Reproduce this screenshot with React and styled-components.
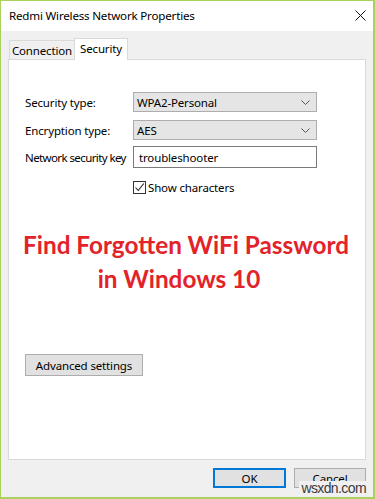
import React from "react";
import styled, { createGlobalStyle } from "styled-components";

const Global = createGlobalStyle`
  html, body { margin: 0; padding: 0; background: #ffffff; }
  * { box-sizing: border-box; }
`;

const Window = styled.div`
  position: relative;
  width: 375px;
  height: 499px;
  display: flex;
  flex-direction: column;
  border-style: solid;
  border-color: #a9d15e;
  border-width: 1px 2px 2px 1px;
  font-family: "Noto Sans", "Open Sans", sans-serif;
  font-size: 11.5px;
  letter-spacing: -0.15px;
  color: #000;
  overflow: hidden;
`;

const TitleBar = styled.div`
  height: 30px;
  flex: none;
  background: #ffffff;
  display: flex;
  align-items: center;
  justify-content: space-between;
  padding: 0 7px 1px 8px;
`;

const Title = styled.span`
  font-size: 11.6px;
  letter-spacing: -0.2px;
  white-space: nowrap;
`;

const CloseIcon = styled.svg`
  width: 11px;
  height: 11px;
`;

const Body = styled.div`
  flex: 1;
  background: #f0f0f0;
  display: flex;
  flex-direction: column;
  padding: 7px 7px 0 7px;
`;

const TabRow = styled.div`
  display: flex;
  align-items: flex-end;
  height: 21px;
  padding-left: 1px;
  position: relative;
  z-index: 1;
`;

const Tab = styled.div`
  height: ${(p) => (p.$active ? "22px" : "19px")};
  width: ${(p) => p.$w}px;
  margin-bottom: ${(p) => (p.$active ? "-1px" : "0")};
  background: ${(p) => (p.$active ? "#ffffff" : "#f0f0f0")};
  border: 1px solid #d9d9d9;
  border-bottom: none;
  ${(p) => (p.$active ? "" : "border-right: none;")}
  display: flex;
  align-items: center;
  justify-content: center;
  padding-bottom: ${(p) => (p.$active ? "2px" : "0")};
  white-space: nowrap;
`;

const Panel = styled.div`
  height: 401px;
  background: #ffffff;
  border: 1px solid #d9d9d9;
  display: flex;
  flex-direction: column;
  padding: 32px 0 0 16px;
`;

const Form = styled.div`
  display: grid;
  grid-template-columns: 108px 184px;
  align-items: center;
`;

const Label = styled.div`
  white-space: nowrap;
  margin-top: ${(p) => p.$mt || 0}px;
  letter-spacing: ${(p) => (p.$tight ? "-0.6px" : "-0.15px")};
`;

const Combo = styled.div`
  height: 20px;
  background: #e5e5e5;
  border: 1px solid #adadad;
  display: flex;
  align-items: center;
  justify-content: space-between;
  padding: 0 6px 0 3px;
  margin-top: ${(p) => p.$mt || 0}px;
`;

const Chevron = styled.svg`
  width: 9px;
  height: 5px;
`;

const TextBox = styled.div`
  height: 22px;
  background: #ffffff;
  border: 1px solid #7a7a7a;
  display: flex;
  align-items: center;
  padding: 0 5px;
  margin-top: ${(p) => p.$mt || 0}px;
`;

const CheckRow = styled.div`
  grid-column: 2;
  display: flex;
  align-items: center;
  gap: 2px;
  margin-top: 13px;
  height: 13px;
`;

const CheckBox = styled.div`
  width: 13px;
  height: 13px;
  border: 1px solid #333;
  background: #fff;
  display: flex;
  align-items: center;
  justify-content: center;
`;

const Headline = styled.div`
  margin-top: 34px;
  margin-left: -16px;
  display: flex;
  flex-direction: column;
  align-items: center;
  font-family: Lato, "Open Sans", sans-serif;
  font-weight: 700;
  font-size: 24.3px;
  letter-spacing: 0;
  line-height: 34px;
  color: #e2232a;
`;

const HeadLine = styled.div`
  white-space: nowrap;
  margin-right: ${(p) => p.$shift || 0}px;
`;

const Spacer = styled.div`
  height: 58px;
`;

const PushButton = styled.button`
  font-family: "Noto Sans", "Open Sans", sans-serif;
  font-size: 11.5px;
  letter-spacing: -0.15px;
  color: #000;
  height: ${(p) => p.$h || 20}px;
  width: ${(p) => p.$w}px;
  background: #e1e1e1;
  border: ${(p) => (p.$primary ? "2px solid #0078d7" : "1px solid #adadad")};
  padding: 0;
  margin: 0;
  display: flex;
  align-items: center;
  justify-content: center;
`;

const Footer = styled.div`
  position: relative;
  display: flex;
  justify-content: flex-end;
  gap: 8px;
  margin-top: 8px;
`;

const Watermark = styled.div`
  position: absolute;
  right: -2px;
  top: 13px;
  padding: 0 2px;
  background: #f0f0f0;
  font-family: "Liberation Sans", Arial, sans-serif;
  font-size: 14px;
  line-height: 14px;
  letter-spacing: -0.6px;
  color: #3a3a3a;
`;

export default function App() {
  return (
    <>
      <Global />
      <Window>
        <TitleBar>
          <Title>Redmi Wireless Network Properties</Title>
          <CloseIcon viewBox="0 0 11 11">
            <path d="M0.5 0.5 L10.5 10.5 M10.5 0.5 L0.5 10.5" stroke="#111" strokeWidth="1" fill="none" />
          </CloseIcon>
        </TitleBar>
        <Body>
          <TabRow>
            <Tab $w={65}>Connection</Tab>
            <Tab $w={54} $active>Security</Tab>
          </TabRow>
          <Panel>
            <Form>
              <Label>Security type:</Label>
              <Combo>
                <span>WPA2-Personal</span>
                <Chevron viewBox="0 0 9 5">
                  <path d="M0.5 0.5 L4.5 4.5 L8.5 0.5" stroke="#555" fill="none" strokeWidth="1" />
                </Chevron>
              </Combo>
              <Label $mt={8}>Encryption type:</Label>
              <Combo $mt={8}>
                <span>AES</span>
                <Chevron viewBox="0 0 9 5">
                  <path d="M0.5 0.5 L4.5 4.5 L8.5 0.5" stroke="#555" fill="none" strokeWidth="1" />
                </Chevron>
              </Combo>
              <Label $mt={6} $tight>Network security key</Label>
              <TextBox $mt={6}>troubleshooter</TextBox>
              <CheckRow>
                <CheckBox>
                  <svg width="11" height="11" viewBox="0 0 11 11">
                    <path d="M1.5 5.5 L4.2 8.5 L9.8 1.5" stroke="#222" strokeWidth="1.1" fill="none" />
                  </svg>
                </CheckBox>
                <span>Show characters</span>
              </CheckRow>
            </Form>
            <Headline>
              <HeadLine $shift={2}>Find Forgotten WiFi Password</HeadLine>
              <HeadLine $shift={16}>in Windows 10</HeadLine>
            </Headline>
            <Spacer />
            <PushButton $w={118} $h={22}>Advanced settings</PushButton>
          </Panel>
          <Footer>
            <PushButton $w={73} $primary>OK</PushButton>
            <PushButton $w={72}>Cancel</PushButton>
            <Watermark>wsxdn.com</Watermark>
          </Footer>
        </Body>
      </Window>
    </>
  );
}
